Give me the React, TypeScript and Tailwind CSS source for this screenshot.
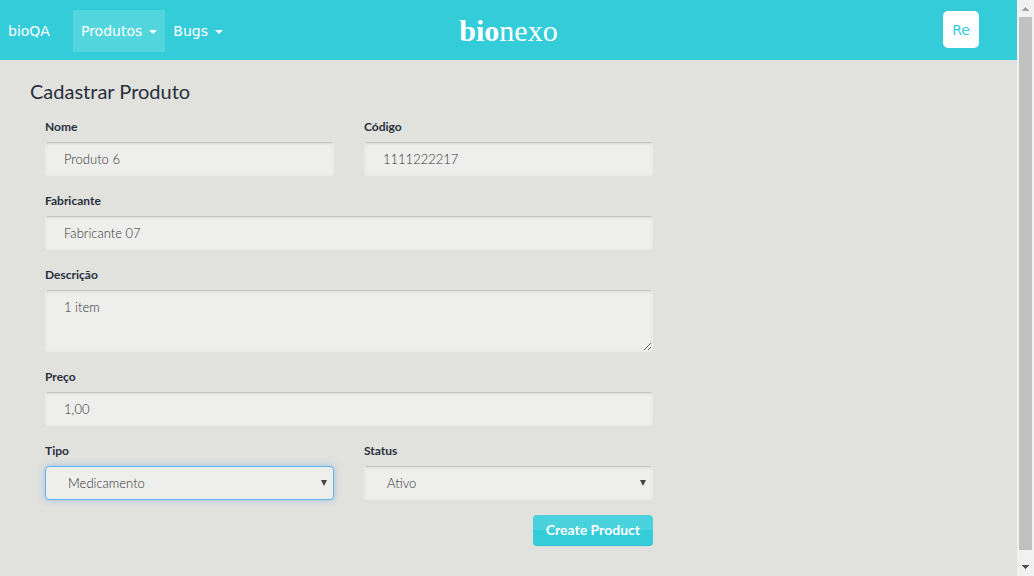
import React from "react";

const controlBase =
  "block w-full rounded-[4px] border bg-[#eeeeec] font-light text-[13px] leading-5 text-[#333333] outline-none";
const restingBorder =
  "border-[#ebebe9] border-t-[#c6c7c4] shadow-[inset_0_1px_2px_rgba(0,0,0,0.08)]";
const focusedBorder = "border-[#66afe9] shadow-[0_0_6px_rgba(102,175,233,0.6)]";

function Field({
  id,
  label,
  wide = false,
  children,
}: {
  id: string;
  label: string;
  wide?: boolean;
  children: React.ReactNode;
}) {
  return (
    <div className={wide ? "col-span-2" : "col-span-1"}>
      <label
        htmlFor={id}
        className="mb-[5px] block text-xs leading-5 font-bold text-[#292f3d]"
      >
        {label}
      </label>
      {children}
    </div>
  );
}

function TextInput({ id, value }: { id: string; value: string }) {
  return (
    <input
      id={id}
      type="text"
      defaultValue={value}
      className={`${controlBase} ${restingBorder} h-[34px] px-[18px]`}
    />
  );
}

function SelectInput({
  id,
  options,
  highlighted = false,
}: {
  id: string;
  options: string[];
  highlighted?: boolean;
}) {
  return (
    <div className="relative">
      <select
        id={id}
        className={`${controlBase} ${highlighted ? focusedBorder : restingBorder} h-[34px] appearance-none px-[22px]`}
      >
        {options.map((o) => (
          <option key={o}>{o}</option>
        ))}
      </select>
      <svg
        viewBox="0 0 6 6"
        className="pointer-events-none absolute top-[14px] right-[7px] size-1.5 fill-[#444444]"
        aria-hidden="true"
      >
        <path d="M0 0h6L3 6z" />
      </svg>
    </div>
  );
}

function Caret() {
  return (
    <svg viewBox="0 0 8 4" className="mt-0.5 h-1 w-2 fill-white" aria-hidden="true">
      <path d="M0 0h8L4 4z" />
    </svg>
  );
}

function Navbar() {
  return (
    <header className="grid h-[60px] grid-cols-[1fr_auto_1fr] items-center bg-[#35ccd9] text-sm text-white">
      <nav className="flex items-center pt-0.5 pl-2 font-['DejaVu_Sans',sans-serif]">
        <a href="#inicio" className="mr-[23px]">
          bioQA
        </a>
        <button className="flex h-[42px] items-center gap-[7px] bg-[#52d5dc] px-2">
          Produtos <Caret />
        </button>
        <button className="flex h-[42px] items-center gap-[7px] px-2">
          Bugs <Caret />
        </button>
      </nav>
      <a
        href="#inicio"
        className="pt-0.5 font-['Liberation_Serif',serif] text-[30px] leading-10"
      >
        <span className="font-bold">bio</span>nexo
      </a>
      <div className="flex justify-end pr-[38px]">
        <button className="mb-px h-[37px] w-9 rounded-[5px] bg-white font-['DejaVu_Sans',sans-serif] text-[#35ccd9]">
          Re
        </button>
      </div>
    </header>
  );
}

function ScrollRail() {
  return (
    <div
      aria-hidden="true"
      className="sticky top-0 flex h-screen w-[17px] shrink-0 flex-col items-center bg-[#f1f1f1]"
    >
      <svg viewBox="0 0 17 17" className="size-[17px] shrink-0 fill-[#a3a3a3]">
        <path d="M8 7h1v1h1v1h1v1h1v1H5v-1h1V9h1V8h1z" />
      </svg>
      <div className="mb-[9px] w-[13px] flex-1 bg-[#c1c1c1]" />
      <svg viewBox="0 0 17 17" className="size-[17px] shrink-0 fill-[#505050]">
        <path d="M5 6h7v1h-1v1h-1v1H9v1H8V9H7V8H6V7H5z" />
      </svg>
    </div>
  );
}

export default function App() {
  return (
    <div className="flex min-h-screen bg-[#e1e1dd] font-[Lato,sans-serif]">
      <div className="min-w-0 flex-1">
        <Navbar />
        <main className="px-[30px] pt-5 pb-[30px]">
          <h1 className="mb-[15px] text-xl leading-[22px] text-[#292f3d]">
            Cadastrar Produto
          </h1>
          <form
            className="grid w-2/3 grid-cols-2 gap-x-[30px] gap-y-[15px] px-[15px]"
            onSubmit={(e) => e.preventDefault()}
          >
            <Field id="nome" label="Nome">
              <TextInput id="nome" value="Produto 6" />
            </Field>
            <Field id="codigo" label="Código">
              <TextInput id="codigo" value="1111222217" />
            </Field>
            <Field id="fabricante" label="Fabricante" wide>
              <TextInput id="fabricante" value="Fabricante 07" />
            </Field>
            <Field id="descricao" label="Descrição" wide>
              <textarea
                id="descricao"
                defaultValue="1 item"
                className={`${controlBase} ${restingBorder} h-[62px] resize-y px-[18px] py-1.5`}
              />
            </Field>
            <Field id="preco" label="Preço" wide>
              <TextInput id="preco" value="1,00" />
            </Field>
            <Field id="tipo" label="Tipo">
              <SelectInput id="tipo" options={["Medicamento"]} highlighted />
            </Field>
            <Field id="status" label="Status">
              <SelectInput id="status" options={["Ativo"]} />
            </Field>
            <div className="col-span-2 flex justify-end">
              <button
                type="submit"
                className="h-[31px] rounded-[4px] border-b border-[#27c3d0] bg-linear-to-b from-[#49d1dc] from-50% to-[#35ccd9] to-50% px-[13px] text-sm font-bold text-white"
              >
                Create Product
              </button>
            </div>
          </form>
        </main>
      </div>
      <ScrollRail />
    </div>
  );
}
